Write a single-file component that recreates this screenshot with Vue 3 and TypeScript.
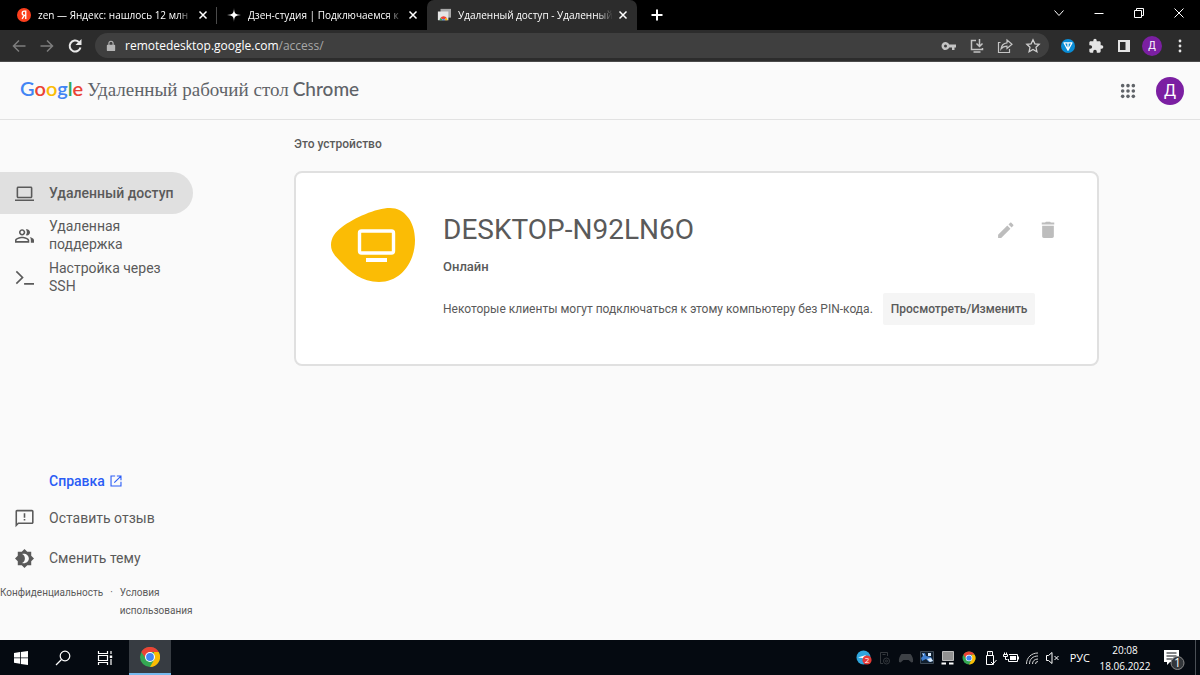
<script setup lang="ts">
interface Tab {
  title: string
  icon: 'yandex' | 'zen' | 'remote'
  active: boolean
}

interface NavItem {
  label: string
  path: string
  active: boolean
}

const tabs: Tab[] = [
  { title: 'zen — Яндекс: нашлось 12 млн', icon: 'yandex', active: false },
  { title: 'Дзен-студия | Подключаемся к', icon: 'zen', active: false },
  { title: 'Удаленный доступ - Удаленный', icon: 'remote', active: true },
]

const navItems: NavItem[] = [
  {
    label: 'Удаленный доступ',
    path: 'M20 18c1.1 0 2-.9 2-2V5c0-1.100-.9-2-2-2H4c-1.100 0-2 .9-2 2v11c0 1.100.9 2 2 2zM4 5h16v11H4zM0 19.500h24v2H0z',
    active: true,
  },
  {
    label: 'Удаленная поддержка',
    path: 'M9 12c2.200 0 4-1.800 4-4s-1.800-4-4-4-4 1.800-4 4 1.800 4 4 4zm0-6c1.100 0 2 .9 2 2s-.9 2-2 2-2-.9-2-2 .9-2 2-2zM9 13.500c-3 0-9 1.500-9 4.500v3h18v-3c0-3-6-4.500-9-4.500zM16 19H2v-1c0-.8 3.700-2.500 7-2.500s7 1.700 7 2.500zM15 12c2.200 0 4-1.800 4-4s-1.800-4-4-4c-.5 0-.9.100-1.300.200C14.500 5.300 15 6.600 15 8s-.5 2.700-1.300 3.800c.4.100.8.200 1.300.2zM18.500 14c1 .9 1.500 2.200 1.500 4v3h4v-3c0-2.100-2.800-3.400-5.500-4z',
    active: false,
  },
  {
    label: 'Настройка через SSH',
    path: 'M2.400 3.500 11 12l-8.600 8.500L1 19l7.100-7L1 5zM11.500 19H24v2H11.500z',
    active: false,
  },
]

const dots = [4, 12, 20]
const host = 'DESKTOP-N92LN6O'
</script>

<template>
  <div class="screen">
    <header class="tabstrip">
      <div v-for="tab in tabs" :key="tab.title" class="tab" :class="{ active: tab.active }">
        <svg v-if="tab.icon === 'yandex'" class="fav" viewBox="0 0 16 16">
          <circle cx="8" cy="8" r="8" fill="#fc3f1d" />
          <path d="M10 12.500V3.600H8.400a2.400 2.400 0 0 0 0 4.900H10M8.300 8.500 5.800 12.500" fill="none" stroke="#fff" stroke-width="1.500" />
        </svg>
        <svg v-else-if="tab.icon === 'zen'" class="fav" viewBox="0 0 16 16">
          <path d="M8 0c.2 6 1.500 7.800 8 8-6.500.2-7.800 2-8 8-.2-6-1.500-7.800-8-8 6.500-.2 7.800-2 8-8z" fill="#fff" />
        </svg>
        <svg v-else class="fav" viewBox="0 0 16 16">
          <path d="M4 1h12v10H4z" fill="#a9a9a9" />
          <path d="M1 4h12v10H1z" fill="#e6e6e6" />
          <path d="M3 14a4.500 4.500 0 0 1 .8-2.600L6 12.500V14z" fill="#34a853" />
          <path d="M3.800 11.400a4.500 4.500 0 0 1 7.400 0L9 12.500H6z" fill="#ea4335" />
          <path d="M12 14a4.500 4.500 0 0 0-.8-2.600L9 12.500V14z" fill="#fbbc04" />
          <path d="M5.700 14a1.800 1.800 0 0 1 3.600 0z" fill="#4285f4" />
        </svg>
        <span class="tab-title">{{ tab.title }}</span>
        <button class="tab-close" aria-label="Закрыть вкладку">
          <svg viewBox="0 0 10 10"><path d="m1.500 1.500 7 7m0-7-7 7" stroke="#fff" stroke-width="1.500" /></svg>
        </button>
      </div>
      <button class="new-tab" aria-label="Новая вкладка">
        <svg viewBox="0 0 12 12"><path d="M6 .5v11M.5 6h11" stroke="#fff" stroke-width="2" /></svg>
      </button>
      <div class="window-controls">
        <button aria-label="Поиск вкладок"><svg viewBox="0 0 12 12"><path d="m1.500 3.500 4.500 5 4.500-5" /></svg></button>
        <button aria-label="Свернуть"><svg viewBox="0 0 12 12"><path d="M1.500 6.500h9" /></svg></button>
        <button aria-label="Развернуть"><svg viewBox="0 0 12 12"><path d="M1.500 3.500h7v7h-7zM3.500 3.500v-2h7v7h-2" /></svg></button>
        <button aria-label="Закрыть"><svg viewBox="0 0 12 12"><path d="m1.500 1.500 9 9m0-9-9 9" /></svg></button>
      </div>
    </header>

    <div class="toolbar">
      <button class="tool" aria-label="Назад">
        <svg viewBox="0 0 16 16" fill="none" stroke="#7d7d7d" stroke-width="1.500"><path d="M14.500 8H2.500M8 2.500 2.500 8 8 13.500" /></svg>
      </button>
      <button class="tool" aria-label="Вперед">
        <svg viewBox="0 0 16 16" fill="none" stroke="#7d7d7d" stroke-width="1.500"><path d="M1.500 8h12M8 2.500 13.500 8 8 13.500" /></svg>
      </button>
      <button class="tool" aria-label="Обновить">
        <svg viewBox="0 0 16 16" fill="none" stroke="#e8e8e8" stroke-width="2"><path d="M13.500 9.500a5.500 5.500 0 1 1-1.700-5.600" /><path d="M14.500 1v6h-6z" fill="#e8e8e8" stroke="none" /></svg>
      </button>
      <div class="omnibox">
        <svg class="lock" viewBox="0 0 12 14"><path d="M2 5.500h8a1 1 0 0 1 1 1V12a1 1 0 0 1-1 1H2a1 1 0 0 1-1-1V6.500a1 1 0 0 1 1-1z" fill="#b5b5b5" /><path d="M3.500 6V3.700a2.500 2.500 0 0 1 5 0V6" fill="none" stroke="#b5b5b5" stroke-width="1.300" /></svg>
        <p class="url">remotedesktop.google.com<span>/access/</span></p>
        <button class="tool" aria-label="Пароли">
          <svg viewBox="0 0 16 16"><path d="M8.200 6.500a4 4 0 1 0 0 3H11V12h2.500V9.500H15v-3zM4.500 9.500a1.500 1.500 0 1 1 0-3 1.500 1.500 0 0 1 0 3z" fill="#c4c4c4" /></svg>
        </button>
        <button class="tool" aria-label="Установить">
          <svg viewBox="0 0 16 16" fill="none" stroke="#c4c4c4" stroke-width="1.500"><path d="M7 2.500H2.500v9h11V10M4.500 14h7M10.500 1v7M7.500 5.500l3 3 3-3" /></svg>
        </button>
        <button class="tool" aria-label="Поделиться">
          <svg viewBox="0 0 16 16" fill="none" stroke="#c4c4c4" stroke-width="1.200"><path d="M3.500 4.500h-2v10h11V11M10 2l5 4.200-5 4.300V8.200c-3 0-4.500.8-6 2.800.4-3.500 2.300-5.800 6-6.200z" /></svg>
        </button>
        <button class="tool" aria-label="Добавить в закладки">
          <svg viewBox="0 0 16 16" fill="none" stroke="#d0d0d0" stroke-width="1.300"><path d="m8 1.800 1.900 4 4.300.5-3.200 3 .9 4.400L8 11.500l-3.900 2.200.9-4.400-3.200-3 4.300-.5z" /></svg>
        </button>
      </div>
      <button class="tool" aria-label="Расширение TON">
        <svg viewBox="0 0 16 16"><circle cx="8" cy="8" r="7" fill="#0a8dd6" /><path d="M4 4.800h8L8 12.200zM8 5v7" fill="none" stroke="#fff" stroke-width="1.300" stroke-linejoin="round" /></svg>
      </button>
      <button class="tool" aria-label="Расширения">
        <svg viewBox="0 0 24 24"><path d="M20.500 11H19V7c0-1.100-.9-2-2-2h-4V3.500a2.500 2.500 0 0 0-5 0V5H4c-1.100 0-2 .9-2 2v3.800h1.500a2.700 2.700 0 0 1 0 5.400H2V20c0 1.100.9 2 2 2h3.800v-1.500a2.700 2.700 0 0 1 5.400 0V22H17c1.100 0 2-.9 2-2v-4h1.500a2.500 2.500 0 0 0 0-5z" fill="#e4e4e4" /></svg>
      </button>
      <button class="tool" aria-label="Боковая панель">
        <svg viewBox="0 0 16 16"><path d="M2 2h12v12H2zM4 4v8h5.500V4z" fill="#e4e4e4" fill-rule="evenodd" /></svg>
      </button>
      <button class="avatar small" aria-label="Профиль Chrome">Д</button>
      <button class="tool" aria-label="Меню">
        <svg viewBox="0 0 16 16" fill="#e4e4e4"><circle cx="8" cy="3" r="1.400" /><circle cx="8" cy="8" r="1.400" /><circle cx="8" cy="13" r="1.400" /></svg>
      </button>
    </div>

    <div class="appbar">
      <h1 class="brand">
        <span class="google"><b class="g-blue">G</b><b class="g-red">o</b><b class="g-yellow">o</b><b class="g-blue">g</b><b class="g-green">l</b><b class="g-red">e</b></span>
        <span class="product">Удаленный рабочий стол</span>
        <span class="chrome-word">Chrome</span>
      </h1>
      <button class="apps" aria-label="Приложения Google">
        <svg viewBox="0 0 24 24" fill="#5f6368">
          <template v-for="y in dots" :key="y">
            <circle v-for="x in dots" :key="x" :cx="x" :cy="y" r="2.700" />
          </template>
        </svg>
      </button>
      <button class="avatar" aria-label="Аккаунт Google">Д</button>
    </div>

    <div class="body">
      <aside class="sidebar">
        <nav>
          <a v-for="item in navItems" :key="item.label" href="#" class="nav-item" :class="{ current: item.active }">
            <svg viewBox="0 0 24 24"><path :d="item.path" fill="#5a5a5a" fill-rule="evenodd" /></svg>
            <span>{{ item.label }}</span>
          </a>
        </nav>
        <div class="side-bottom">
          <a href="#" class="help">
            Справка
            <svg viewBox="0 0 14 14" fill="none" stroke="#2a5cf5" stroke-width="1.300"><path d="M6 1.200H1.200v11.600h11.600V8M8 1.200h4.800V6M12.500 1.500 5 9" /></svg>
          </a>
          <button class="side-action">
            <svg viewBox="0 0 24 24" fill="#5a5a5a"><path d="M21.500 1h-19C1.500 1 .6 1.900.6 3v20l4-4h16.900c1.100 0 2-.9 2-2V3c0-1.100-.9-2-2-2zM2.600 3h18.900v14H3.800l-1.200 1.200zM11 5.500h2v5.500h-2zM11 12.500h2v2h-2z" fill-rule="evenodd" /></svg>
            Оставить отзыв
          </button>
          <button class="side-action">
            <svg viewBox="0 0 24 24" fill="#5a5a5a"><path d="M20.500 8.500V3.500h-5L12 0 8.500 3.500h-5v5L0 12l3.500 3.500v5h5L12 24l3.500-3.500h5v-5L24 12zM11 18c-.7 0-1.500-.1-2-.4C11.200 16.600 12.500 14.500 12.500 12S11.200 7.400 9 6.400c.5-.3 1.300-.4 2-.4 3.500 0 6.500 2.700 6.500 6s-3 6-6.500 6z" fill-rule="evenodd" /></svg>
            Сменить тему
          </button>
          <div class="legal">
            <a href="#">Конфиденциальность</a>
            <span>·</span>
            <a href="#">Условия использования</a>
          </div>
        </div>
      </aside>

      <main>
        <h2>Это устройство</h2>
        <section class="card">
          <svg class="blob" viewBox="0 0 84 74">
            <path d="M59 0C73 0 84 13 84 32c0 22-14 42-36 42C31 74 19 64 9 53 3 47 0 43 0 37c0-7 4-13 11-18C23 10 45 0 59 0z" fill="#fbbc05" />
            <rect x="28.500" y="23" width="34" height="22" rx="2" fill="none" stroke="#fff" stroke-width="3.400" />
            <path d="M35 50h21v4H35z" fill="#fff" />
          </svg>
          <div class="details">
            <div class="title-row">
              <h3>{{ host }}</h3>
              <button class="icon-btn" aria-label="Переименовать">
                <svg viewBox="0 0 24 24"><path d="M2.500 17.800V21.500h3.700L17.300 10.400l-3.700-3.700zM20.700 7c.4-.4.4-1 0-1.400l-2.300-2.300c-.4-.4-1-.4-1.400 0l-2 2L18.700 9z" fill="#bdbdbd" /></svg>
              </button>
              <button class="icon-btn" aria-label="Удалить">
                <svg viewBox="0 0 24 24"><path d="M5 7v12.500c0 1.100.9 2 2 2h10c1.100 0 2-.9 2-2V7zM19.500 3h-4l-1-1h-5l-1 1h-4v2.500h15z" fill="#bdbdbd" /></svg>
              </button>
            </div>
            <p class="status">Онлайн</p>
            <div class="pin-row">
              <p>Некоторые клиенты могут подключаться к этому компьютеру без PIN-кода.</p>
              <button class="manage">Просмотреть/Изменить</button>
            </div>
          </div>
        </section>
      </main>
    </div>

    <footer class="taskbar">
      <button class="task" aria-label="Пуск">
        <svg viewBox="0 0 16 16" fill="#fff"><path d="M1 3l6-.9v5.400H1zM7.800 2 15 1v6.500H7.800zM1 8.300h6v5.400l-6-.9zM7.800 8.300H15V15l-7.200-1z" /></svg>
      </button>
      <button class="task" aria-label="Поиск">
        <svg viewBox="0 0 16 16" fill="none" stroke="#fff" stroke-width="1.200"><circle cx="10" cy="6" r="4.800" /><path d="M6.500 9.500 1 15" /></svg>
      </button>
      <button class="task" aria-label="Представление задач">
        <svg viewBox="0 0 16 16" fill="none" stroke="#fff" stroke-width="1.200"><path d="M1.500 1v2.500h9V1M1.500 15v-2.500h9V15M1.500 5.500h9v5h-9zM14 1v3M14 9v6" /><path d="M12.800 5.500h2.400v2.500h-2.400z" fill="#fff" stroke="none" /></svg>
      </button>
      <button class="task running" aria-label="Google Chrome">
        <svg class="chrome" viewBox="0 0 20 20">
          <circle cx="10" cy="10" r="10" fill="#34a853" />
          <path d="M1.300 5A10 10 0 0 1 18.700 5H10L6 12z" fill="#ea4335" />
          <path d="M18.700 5A10 10 0 0 1 10 20l4.300-7.500L14 5z" fill="#fbbc04" />
          <circle cx="10" cy="10" r="5" fill="#fff" /><circle cx="10" cy="10" r="3.900" fill="#4285f4" />
        </svg>
      </button>
      <div class="tray">
        <svg viewBox="0 0 16 16"><circle cx="7.500" cy="7.500" r="7" fill="#2fa6dd" /><path d="m2 7.500 8-2.500-2 4-2-1z" fill="#fff" /><circle cx="11" cy="10" r="4.600" fill="#e53935" /><text x="11" y="13" text-anchor="middle" class="badge-text">2</text></svg>
        <svg viewBox="0 0 16 16" fill="none" stroke="#34383d"><path d="M6 13.500H3.500v-11h7V6M5.500 4.500h3" /><circle cx="9.500" cy="11" r="3" /><circle cx="9.500" cy="11" r="1" /></svg>
        <svg viewBox="0 0 16 16"><path d="M3.500 4h9c2 2 3 5 2.500 8l-1.500.5-3-2.500h-5l-3 2.500L1 12c-.5-3 .5-6 2.500-8z" fill="#3d4146" /></svg>
        <svg viewBox="0 0 16 16"><path d="M1.500 1.500h13v12h-13z" fill="#11202f" stroke="#3f4a55" /><path d="M3 3.500 6 3l1 3 5 1 2 4-4 1-3-3-4 2-1-3 2-2z" fill="#3f7fd0" /><path d="m3 3 2 1v2zM9 3h3v3H9zM8 9l4-1 2 3-3 1z" fill="#d8e8f7" /></svg>
        <svg viewBox="0 0 16 16"><path d="M2.500 1.500h11v9h-11z" fill="#929292" stroke="#bdbdbd" /><path d="M1.500 12.500H6v2H1.500zM9 12.500h4.500v2H9z" fill="#fff" /></svg>
        <svg viewBox="0 0 16 16">
          <circle cx="8" cy="8" r="6.500" fill="#34a853" />
          <path d="M2.400 4.700a6.500 6.500 0 0 1 11.200 0H8L5.500 9z" fill="#ea4335" />
          <path d="M13.600 4.700A6.500 6.500 0 0 1 8 14.500L11 9V4.700z" fill="#fbbc04" />
          <circle cx="8" cy="8" r="3.300" fill="#fff" /><circle cx="8" cy="8" r="2.600" fill="#4285f4" />
        </svg>
        <svg viewBox="0 0 16 16" fill="none" stroke="#fff"><path d="M5.500 5V1.500h5V5M7.500 3h1M4.500 5.500h7v9h-7zM9 12l2 2 3.500-4" /></svg>
        <svg viewBox="0 0 16 16" fill="none" stroke="#fff"><path d="M6 4.500h8.500v7h-9V9M15.500 6.500v3M.5 4.500v2h4v-2zM1.500 4V2.500M3.500 4V2.500M2.500 7v2.500h2" /><path d="M7 6h6v4H7z" fill="#fff" stroke="none" /></svg>
        <svg viewBox="0 0 16 16" fill="none" stroke="#d5d5d5"><path d="M2.500 14C2.500 7.500 7.500 3 14 3M5.500 14c0-5 3.500-8 8.500-8M8.500 14c0-3 2-5 5.500-5M11.500 14a2.500 2.500 0 0 1 2.500-2.500" /></svg>
        <svg viewBox="0 0 16 16" fill="none" stroke="#fff"><path d="M1.500 5.500h2l3.500-3v11l-3.500-3h-2zM9.500 6l4 4m0-4-4 4" /></svg>
      </div>
      <button class="lang">РУС</button>
      <div class="clock"><time>20:08</time><time>18.06.2022</time></div>
      <button class="notify" aria-label="Уведомления">
        <svg viewBox="0 0 24 24"><path d="M2 4h15v12H8l-3 3v-3H2z" fill="#fff" /><path d="M4.500 7h10M4.500 10h10M4.500 13h6" stroke="#080c12" /><circle cx="15.500" cy="17" r="6.500" fill="#33373b" stroke="#8a8a8a" /><text x="15.500" y="21" text-anchor="middle" class="count-text">1</text></svg>
      </button>
      <span class="peek"></span>
    </footer>
  </div>
</template>

<style>
body {
  margin: 0;
  background: #fafafa;
}
</style>

<style scoped>
.screen {
  min-height: 100vh;
  display: flex;
  flex-direction: column;
  background: #fafafa;
  color: #5a5a5a;
  font-family: Roboto, sans-serif;
  font-size: 14px;
  overflow: hidden;
}
.screen * { box-sizing: border-box; }
h1, h2, h3, p { margin: 0; }
a { color: inherit; text-decoration: none; }
button {
  padding: 0;
  border: 0;
  background: none;
  color: inherit;
  font: inherit;
}
svg { display: block; flex: none; }

.tabstrip {
  display: flex;
  height: 30px;
  padding: 0 1px 0 7px;
  background: #000;
}
.tab {
  display: flex;
  align-items: center;
  width: 210px;
  padding: 0 7px 0 10px;
  color: #fff;
  position: relative;
}
.tab:first-child::after {
  content: "";
  position: absolute;
  right: 0;
  top: 7px;
  width: 1px;
  height: 17px;
  background: #4a4a4a;
}
.tab.active {
  background: #2c2c2c;
  border-radius: 7px 7px 0 0;
}
.fav { width: 14px; height: 14px; }
.tab-title {
  flex: 1;
  min-width: 0;
  margin: 0 3px 0 7px;
  overflow: hidden;
  white-space: nowrap;
  font: 10px/16px "Open Sans", "Noto Sans", sans-serif;
  mask-image: linear-gradient(to right, #000 90%, transparent);
}
.tab-close {
  width: 14px;
  height: 14px;
  display: grid;
  place-items: center;
}
.tab-close svg { width: 10px; height: 10px; }
.new-tab { width: 40px; display: grid; place-items: center; }
.new-tab svg { width: 12px; height: 12px; }
.window-controls { display: flex; margin-left: auto; height: 26px; }
.window-controls button { width: 40px; display: grid; place-items: center; }
.window-controls svg { width: 12px; height: 12px; fill: none; stroke: #fff; }

.toolbar {
  display: flex;
  align-items: center;
  height: 32px;
  padding: 0 6px 0 5px;
  background: #2c2c2c;
  border-bottom: 1px solid #4a4a4a;
}
.tool {
  width: 28px;
  height: 24px;
  display: grid;
  place-items: center;
}
.tool svg { width: 16px; height: 16px; }
.omnibox {
  flex: 1;
  display: flex;
  align-items: center;
  height: 25px;
  margin: 0 5px 0 6px;
  padding: 0 2px 0 11px;
  border-radius: 13px;
  background: #3f3f3f;
}
.lock { width: 10px; height: 12px; }
.url {
  flex: 1;
  margin-left: 9px;
  color: #fff;
  font: 12px/18px "Open Sans", "Noto Sans", sans-serif;
}
.url span { color: #a8a8a8; }
.avatar {
  width: 28px;
  height: 28px;
  border-radius: 50%;
  background: #7b1fa2;
  color: #fff;
  font-size: 16px;
  line-height: 28px;
  text-align: center;
}
.avatar.small {
  width: 20px;
  height: 20px;
  margin: 0 4px;
  font-size: 10px;
  line-height: 20px;
}

.appbar {
  display: flex;
  align-items: center;
  height: 58px;
  padding: 0 16px 0 20px;
  border-bottom: 1px solid #e2e2e2;
}
.brand {
  display: flex;
  align-items: baseline;
  gap: 4px;
  padding-bottom: 4px;
  color: #5f6368;
  font-weight: 400;
  line-height: 26px;
}
.google { font: 20px/26px Lato, sans-serif; }
.google b { font-weight: 600; }
.g-blue { color: #4285f4; }
.g-red { color: #ea4335; }
.g-yellow { color: #fbbc05; }
.g-green { color: #34a853; }
.product { font: 19px/26px "Liberation Serif", serif; }
.chrome-word { font: 500 19px/26px Lato, sans-serif; }
.apps { margin-left: auto; margin-right: 20px; }
.apps svg { width: 16px; height: 16px; }

.body { flex: 1; display: flex; }
.sidebar {
  display: flex;
  flex-direction: column;
  width: 193px;
  padding: 52px 0 20px;
  overflow: hidden;
}
.nav-item {
  display: flex;
  align-items: center;
  gap: 15px;
  height: 42px;
  padding: 0 16px 0 15px;
  border-radius: 0 21px 21px 0;
  line-height: 18px;
}
.nav-item svg, .side-action svg { width: 19px; height: 19px; }
.nav-item.current { background: #e0e0e0; font-weight: 500; }
.side-bottom { margin-top: auto; }
.help {
  display: flex;
  align-items: center;
  gap: 5px;
  height: 34px;
  padding-left: 49px;
  color: #2a5cf5;
  font-weight: 500;
}
.help svg { width: 12px; height: 12px; }
.side-action {
  display: flex;
  align-items: center;
  gap: 15px;
  width: 100%;
  height: 40px;
  padding-left: 15px;
}
.legal {
  display: flex;
  gap: 7px;
  padding-top: 6px;
  font-size: 10px;
  line-height: 18px;
}

main { flex: 1; padding: 0 101px; }
h2 {
  margin-top: 16px;
  font-size: 12px;
  font-weight: 500;
  line-height: 16px;
}
.card {
  display: flex;
  gap: 28px;
  margin-top: 19px;
  min-height: 195px;
  padding: 35px;
  border: 2px solid #e0e0e0;
  border-radius: 8px;
  background: #fff;
}
.blob { width: 84px; height: 74px; }
.details { flex: 1; }
.title-row { display: flex; align-items: center; height: 43px; }
h3 {
  flex: 1;
  font-size: 28px;
  font-weight: 400;
  line-height: 40px;
}
.icon-btn {
  width: 42px;
  height: 42px;
  display: grid;
  place-items: center;
}
.icon-btn svg { width: 20px; height: 20px; }
.title-row .icon-btn:last-child { margin-right: -7px; }
.status {
  margin-top: 8px;
  font-size: 13px;
  font-weight: 500;
  line-height: 16px;
}
.pin-row {
  display: flex;
  align-items: center;
  gap: 10px;
  margin-top: 18px;
  font-size: 12px;
  white-space: nowrap;
}
.manage {
  height: 32px;
  padding: 0 8px;
  border-radius: 2px;
  background: #f5f5f5;
  font-weight: 500;
}

.taskbar {
  display: flex;
  align-items: center;
  height: 35px;
  background: #050a11;
  color: #fff;
  font: 11px/16px "Open Sans", "Noto Sans", sans-serif;
}
.task {
  width: 42px;
  height: 35px;
  display: grid;
  place-items: center;
}
.task svg { width: 16px; height: 16px; }
.task.running {
  margin-left: 3px;
  background: #373c42;
  border-bottom: 2px solid #76b9ed;
}
.task svg.chrome { width: 20px; height: 20px; }
.tray { display: flex; gap: 5px; margin-left: auto; }
.tray svg { width: 16px; height: 16px; }
.badge-text { fill: #fff; font-size: 8px; }
.count-text { fill: #fff; font-size: 12px; }
.lang { margin-left: 9px; }
.clock {
  display: flex;
  flex-direction: column;
  align-items: center;
  width: 48px;
  margin-left: 11px;
  font-size: 10px;
}
.notify { margin-left: 13px; }
.notify svg { width: 24px; height: 24px; }
.peek {
  width: 1px;
  height: 35px;
  margin: 0 4px 0 9px;
  background: #4a4f55;
}
</style>
